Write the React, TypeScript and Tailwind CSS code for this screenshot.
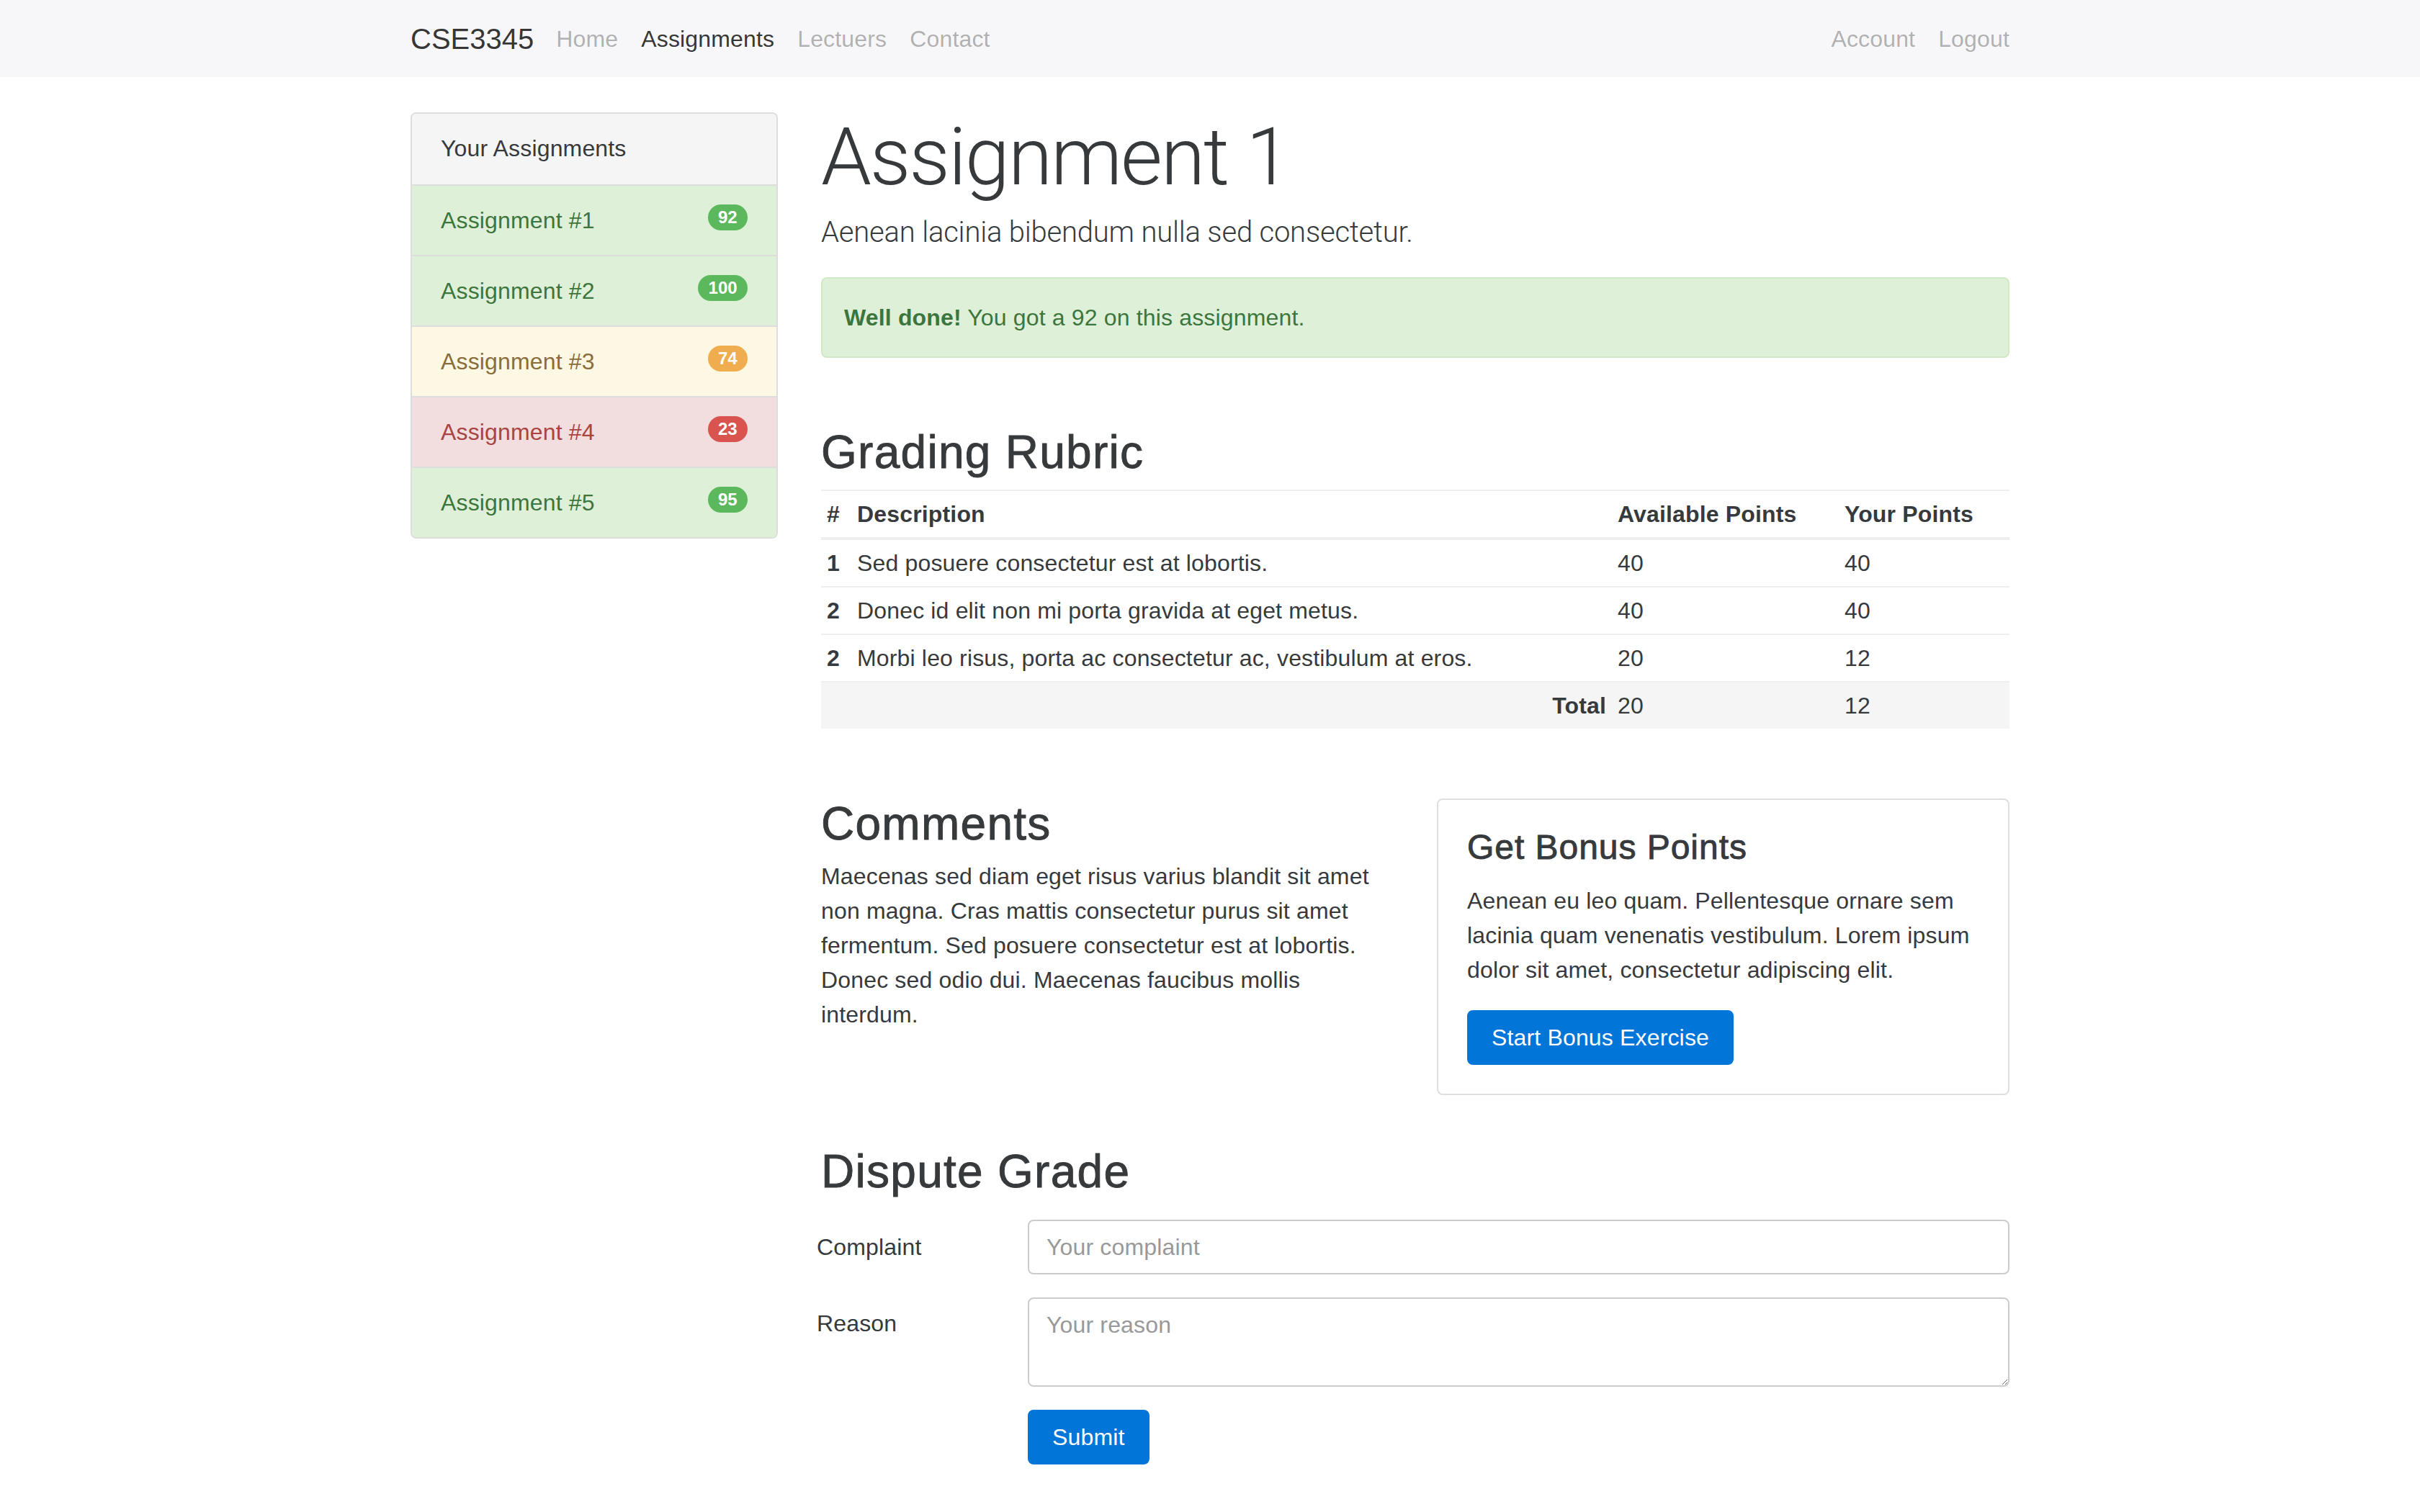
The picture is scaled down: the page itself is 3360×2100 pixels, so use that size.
const NAV_LEFT = ['Home', 'Assignments', 'Lectuers', 'Contact'];

type Item = { label: string; score: number; tone: 'success' | 'warning' | 'danger' };

const ITEMS: Item[] = [
  { label: 'Assignment #1', score: 92, tone: 'success' },
  { label: 'Assignment #2', score: 100, tone: 'success' },
  { label: 'Assignment #3', score: 74, tone: 'warning' },
  { label: 'Assignment #4', score: 23, tone: 'danger' },
  { label: 'Assignment #5', score: 95, tone: 'success' },
];

const ROW_TONE: Record<Item['tone'], string> = {
  success: 'bg-[#dff0d8] text-[#3c763d]',
  warning: 'bg-[#fcf8e3] text-[#8a6d3b]',
  danger: 'bg-[#f2dede] text-[#a94442]',
};

const BADGE_TONE: Record<Item['tone'], string> = {
  success: 'bg-[#5cb85c]',
  warning: 'bg-[#f0ad4e]',
  danger: 'bg-[#d9534f]',
};

const RUBRIC = [
  { n: 1, desc: 'Sed posuere consectetur est at lobortis.', avail: 40, yours: 40 },
  { n: 2, desc: 'Donec id elit non mi porta gravida at eget metus.', avail: 40, yours: 40 },
  { n: 2, desc: 'Morbi leo risus, porta ac consectetur ac, vestibulum at eros.', avail: 20, yours: 12 },
];

// headings are Helvetica Neue Medium in the original: thicken Liberation a touch
const HEADING = 'tracking-[0.02em] [-webkit-text-stroke:0.9px_#373a3c]';

function Navbar() {
  return (
    <nav className="h-[107px] bg-[#f7f7f9]">
      <div className="mx-auto flex h-full w-[2220px] items-center">
        <a className="mr-[31px] text-[40px] leading-[60px] tracking-normal text-black/80">CSE3345</a>
        <ul className="flex gap-[32px] text-[32px] leading-[48px]">
          {NAV_LEFT.map(l => (
            <li key={l} className={l === 'Assignments' ? 'text-black/80' : 'text-black/30'}>{l}</li>
          ))}
        </ul>
        <ul className="ml-auto flex gap-[32px] text-[32px] leading-[48px] text-black/30">
          <li>Account</li>
          <li>Logout</li>
        </ul>
      </div>
    </nav>
  );
}

function Sidebar() {
  return (
    <aside className="w-[510px] shrink-0">
      <div className="overflow-hidden rounded-[8px] border-2 border-[#ddd] divide-y-2 divide-[#ddd]">
        <div className="bg-[#f5f5f5] px-[40px] pt-[24px] pb-[26px] leading-[48px]">Your Assignments</div>
        {ITEMS.map(it => (
          <div key={it.label} className={`flex items-start justify-between px-[40px] py-[24px] leading-[48px] ${ROW_TONE[it.tone]}`}>
            <span>{it.label}</span>
            <span className={`mt-[2px] rounded-full px-[14.4px] py-[6px] text-[24px] font-bold leading-[24px] tracking-normal text-white ${BADGE_TONE[it.tone]}`}>
              {it.score}
            </span>
          </div>
        ))}
      </div>
    </aside>
  );
}

function Rubric() {
  const cell = 'px-[8px] py-[8px] leading-[48px] text-left';
  const head = `${cell} border-t-2 border-b-4 border-[#eceeef] font-bold`;
  return (
    <table className="w-full table-fixed border-collapse">
      <thead>
        <tr>
          <th className={`${head} w-[42px]`}>#</th>
          <th className={head}>Description</th>
          <th className={`${head} w-[315px]`}>Available Points</th>
          <th className={`${head} w-[237px]`}>Your Points</th>
        </tr>
      </thead>
      <tbody>
        {RUBRIC.map((r, i) => (
          <tr key={i} className="border-t-2 border-[#eceeef]">
            <td className={`${cell} font-bold`}>{r.n}</td>
            <td className={cell}>{r.desc}</td>
            <td className={cell}>{r.avail}</td>
            <td className={cell}>{r.yours}</td>
          </tr>
        ))}
        <tr className="border-t-2 border-[#eceeef] bg-[#f5f5f5]">
          <td colSpan={2} className="px-[8px] py-[8px] text-right font-bold leading-[48px]">Total</td>
          <td className={cell}>20</td>
          <td className={cell}>12</td>
        </tr>
      </tbody>
    </table>
  );
}

function DisputeForm() {
  const input = 'flex-1 rounded-[8px] border-2 border-[#ccc] bg-white px-[24px] py-[12px] text-[32px] leading-[48px] text-[#55595c] outline-none placeholder:text-[#999]';
  return (
    <form className="flex flex-col gap-[32px]" onSubmit={e => e.preventDefault()}>
      <div className="flex">
        <label className="-ml-[6px] w-[293px] shrink-0 pt-[14px] leading-[48px]">Complaint</label>
        <input className={input} placeholder="Your complaint" />
      </div>
      <div className="flex">
        <label className="-ml-[6px] w-[293px] shrink-0 pt-[12px] leading-[48px]">Reason</label>
        <textarea rows={2} className={input} placeholder="Your reason" />
      </div>
      <div className="flex">
        <div className="w-[287px] shrink-0" />
        <button className="rounded-[8px] border-2 border-[#0275d8] bg-[#0275d8] px-[32px] py-[12px] text-[32px] leading-[48px] text-white">
          Submit
        </button>
      </div>
    </form>
  );
}

export default function App() {
  return (
    <div className="min-h-screen bg-white font-['Liberation_Sans',Arial,sans-serif] text-[32px] leading-[1.5] tracking-[0.005em] text-[#373a3c]">
      <Navbar />
      <div className="mx-auto mt-[49px] flex w-[2220px] gap-[60px] pb-[66px]">
        <Sidebar />
        <main className="flex w-[1650px] flex-col">
          <h1 className="mb-[14px] font-['Roboto',sans-serif] text-[112px] font-light leading-[1.1] tracking-[-0.02em]">
            Assignment 1
          </h1>
          <p className="mb-[32px] font-['Roboto',sans-serif] text-[40px] font-light leading-[60px] tracking-[-0.005em]">
            Aenean lacinia bibendum nulla sed consectetur.
          </p>
          <div className="rounded-[8px] border-2 border-[#d0e9c6] bg-[#dff0d8] p-[30px] leading-[48px] text-[#3c763d]">
            <strong className="font-bold">Well done!</strong> You got a 92 on this assignment.
          </div>

          <h2 className={`mt-[96px] mb-[16px] text-[64px] leading-[1.1] ${HEADING}`}>Grading Rubric</h2>
          <Rubric />

          <div className="mt-[97px] grid grid-cols-2 gap-[60px]">
            <section>
              <h2 className={`mb-[14px] text-[64px] leading-[1.1] ${HEADING}`}>Comments</h2>
              <p className="leading-[48px]">
                Maecenas sed diam eget risus varius blandit sit amet non magna. Cras mattis consectetur purus sit amet
                fermentum. Sed posuere consectetur est at lobortis. Donec sed odio dui. Maecenas faucibus mollis interdum.
              </p>
            </section>
            <div className="self-start rounded-[8px] border-2 border-black/[0.125] p-[40px]">
              <h4 className={`mb-[24px] text-[48px] leading-[52.8px] ${HEADING}`}>Get Bonus Points</h4>
              <p className="mb-[32px] leading-[48px]">
                Aenean eu leo quam. Pellentesque ornare sem lacinia quam venenatis vestibulum. Lorem ipsum dolor sit amet,
                consectetur adipiscing elit.
              </p>
              <button className="rounded-[8px] border-2 border-[#0275d8] bg-[#0275d8] px-[32px] py-[12px] leading-[48px] text-white">
                Start Bonus Exercise
              </button>
            </div>
          </div>

          <h2 className={`mt-[71px] mb-[31px] text-[64px] leading-[1.1] ${HEADING}`}>Dispute Grade</h2>
          <DisputeForm />
        </main>
      </div>
    </div>
  );
}
